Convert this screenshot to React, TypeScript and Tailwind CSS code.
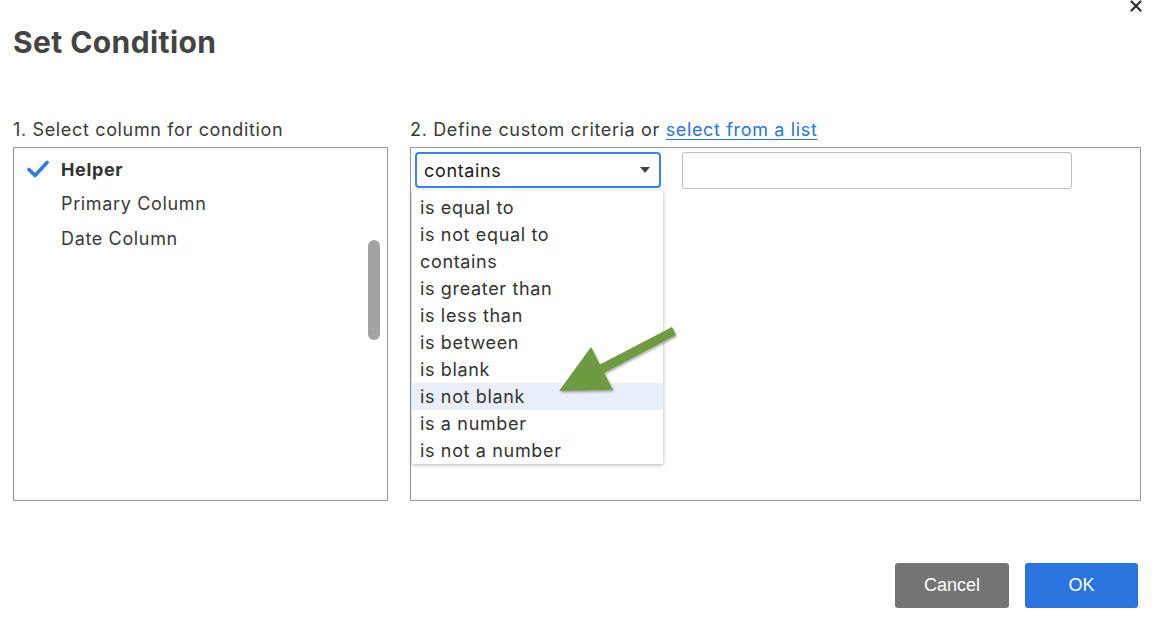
import { X } from "lucide-react";

const columns = ["Helper", "Primary Column", "Date Column"];

const operators = [
  "is equal to",
  "is not equal to",
  "contains",
  "is greater than",
  "is less than",
  "is between",
  "is blank",
  "is not blank",
  "is a number",
  "is not a number",
];

const App = () => {
  return (
    <div className="relative w-[1154px] h-[622px] bg-white overflow-hidden font-['Inter',sans-serif] text-[#3a3a3a] tracking-[0.65px]">
      {/* close */}
      <button className="absolute right-[9px] top-[-3px] text-[#333]">
        <X size={18} strokeWidth={3} />
      </button>

      <div className="pl-[13px] pt-[24px]">
        <h1 className="text-[30px] leading-[36px] font-bold text-[#444] tracking-[0.4px]">Set Condition</h1>

        <div className="mt-[53px] flex gap-[22px]">
          {/* Left column */}
          <div className="w-[375px]">
            <p className="text-[18px] leading-[34px] text-[#3a3a3a]">1. Select column for condition</p>
            <div className="relative h-[354px] border border-[#999] pt-[4px]">
              {columns.map((c, i) => (
                <div key={c} className="flex items-center h-[34.5px] text-[18px]">
                  <div className="w-[47px] flex justify-center">
                    {i === 0 && (
                      <svg width="22" height="18" viewBox="0 0 22 18">
                        <path d="M2 9.5 L8 15.5 L20 2.5" fill="none" stroke="#2d7be5" strokeWidth="3.6" strokeLinecap="round" strokeLinejoin="round" />
                      </svg>
                    )}
                  </div>
                  <span className={i === 0 ? "font-bold text-[#333]" : "text-[#3a3a3a]"}>{c}</span>
                </div>
              ))}
              <div className="absolute right-[7px] top-[92px] w-[12px] h-[100px] rounded-full bg-[#a3a3a3]" />
            </div>
          </div>

          {/* Right column */}
          <div className="w-[731px]">
            <p className="text-[18px] leading-[34px] text-[#3a3a3a]">
              2. Define custom criteria or{" "}
              <a className="text-[#2a73e0] underline underline-offset-[3px] decoration-1">select from a list</a>
            </p>
            <div className="relative h-[354px] border border-[#999] pt-[4px] pl-[4px]">
              <div className="flex gap-[21px]">
                <div className="w-[246px] h-[36px] border-2 border-[#3b82f0] rounded-[4px] flex items-center justify-between pl-[7px] pr-[9px]">
                  <span className="text-[18px] text-[#1a1a1a]">contains</span>
                  <svg width="10" height="6" viewBox="0 0 10 6">
                    <path d="M0 0 L10 0 L5 6 Z" fill="#444" />
                  </svg>
                </div>
                <div className="w-[390px] h-[37px] border border-[#bdbdbd] rounded-[3px]" />
              </div>

              {/* open dropdown */}
              <div className="absolute left-[1px] top-[42px] w-[251px] h-[274px] bg-white shadow-[0_1px_4px_rgba(0,0,0,0.3)] pt-[3.5px]">
                {operators.map((o) => (
                  <div
                    key={o}
                    className={`h-[27px] flex items-center pl-[8px] text-[18px] text-[#333] ${o === "is not blank" ? "bg-[#e9eff9]" : ""}`}
                  >
                    {o}
                  </div>
                ))}
              </div>
            </div>
          </div>
        </div>

        <div className="mt-[62px] flex justify-end gap-[16px] pr-[16px]">
          <button className="w-[114px] h-[45px] rounded-[3px] bg-[#747474] text-white text-[18px] tracking-normal font-['Liberation_Sans',sans-serif]">
            Cancel
          </button>
          <button className="w-[113px] h-[45px] rounded-[3px] bg-[#2a74e0] text-white text-[18px] tracking-normal font-['Liberation_Sans',sans-serif]">
            OK
          </button>
        </div>
      </div>

      {/* annotation arrow */}
      <svg className="absolute left-0 top-0 pointer-events-none" width="1154" height="622">
        <defs>
          <filter id="sh" x="-20%" y="-20%" width="140%" height="140%">
            <feDropShadow dx="1" dy="1.5" stdDeviation="1.2" floodColor="#000" floodOpacity="0.35" />
          </filter>
        </defs>
        <g filter="url(#sh)" fill="#6e9b43">
          <path d="M672 327 L676 335 L604 373 L599 365 Z" />
          <path d="M559 391 L591 347 L613 390 Z" />
        </g>
      </svg>
    </div>
  );
};

export default App;
